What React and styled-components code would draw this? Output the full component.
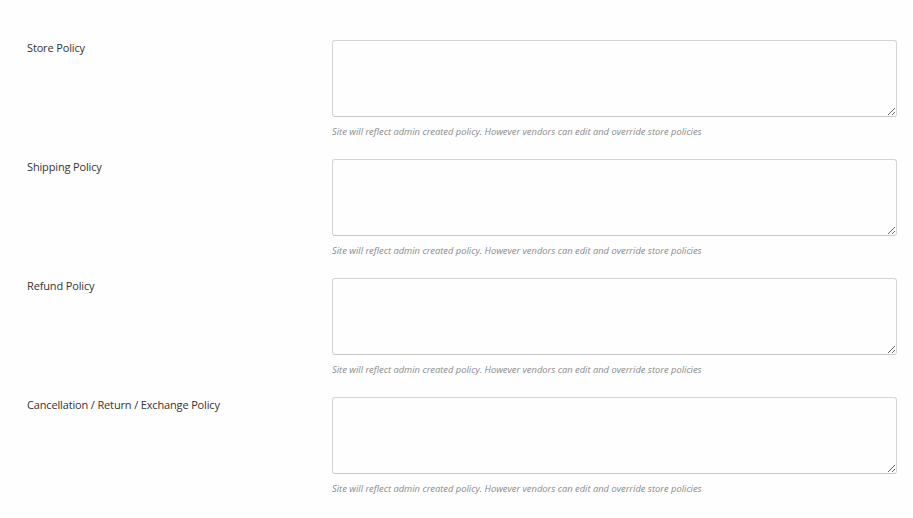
import React from "react";
import styled, { createGlobalStyle } from "styled-components";

const GlobalStyle = createGlobalStyle`
  html, body {
    margin: 0;
    padding: 0;
    background: #fefefe;
    font-family: "Open Sans", "Noto Sans", sans-serif;
  }
`;

const Form = styled.div`
  padding: 40px 16px 0 27px;
  display: flex;
  flex-direction: column;
  gap: 21px;
`;

const Row = styled.div`
  display: grid;
  grid-template-columns: 305px 1fr;
`;

const Label = styled.label`
  font-size: 11px;
  line-height: 16px;
  color: #333;
  letter-spacing: -0.15px;
`;

const Field = styled.div`
  display: flex;
  flex-direction: column;
`;

const TextArea = styled.textarea`
  box-sizing: border-box;
  width: 100%;
  height: 77px;
  border: 1px solid #d4d4d4;
  border-bottom-color: #c8c8c8;
  border-radius: 3px;
  background: #fefefe;
  margin: 0;
  resize: vertical;
  font-family: inherit;
`;

const Help = styled.p`
  margin: 9px 0 0;
  font-size: 9.35px;
  line-height: 12px;
  font-style: italic;
  color: #8a8a8a;
`;

const policies = [
  "Store Policy",
  "Shipping Policy",
  "Refund Policy",
  "Cancellation / Return / Exchange Policy",
];

export default function App() {
  return (
    <>
      <GlobalStyle />
      <Form>
        {policies.map((p) => (
          <Row key={p}>
            <Label>{p}</Label>
            <Field>
              <TextArea />
              <Help>
                Site will reflect admin created policy. However vendors can edit and override store policies
              </Help>
            </Field>
          </Row>
        ))}
      </Form>
    </>
  );
}
